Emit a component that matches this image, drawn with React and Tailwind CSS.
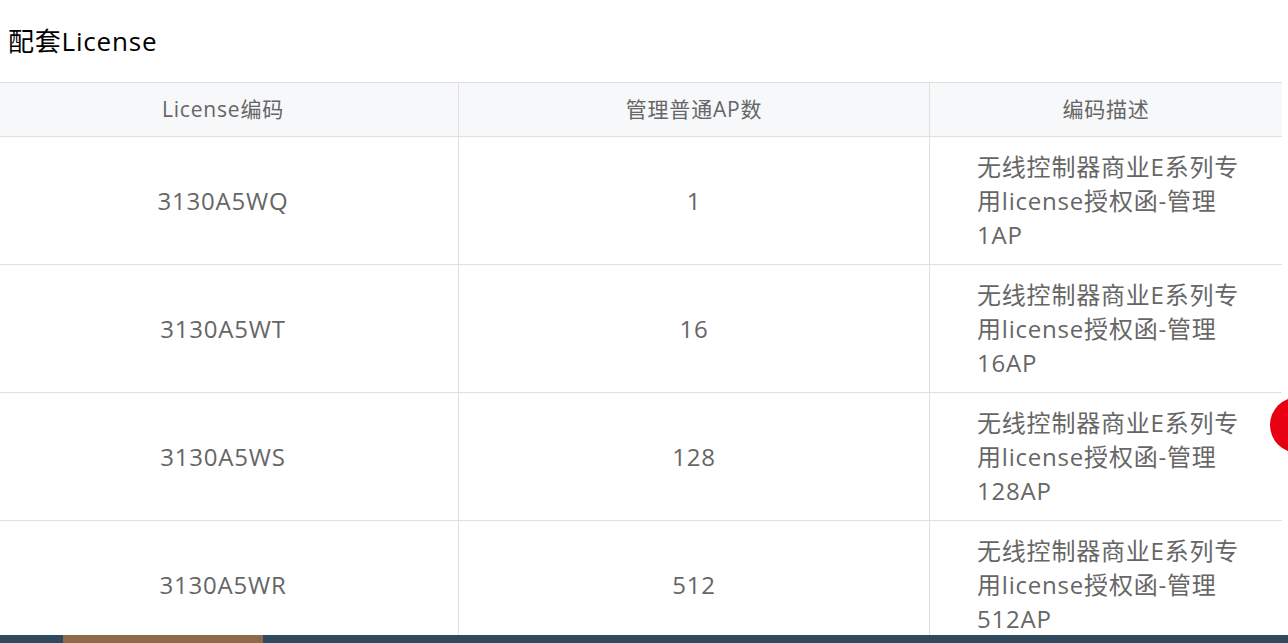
import React from "react";

const rows = [
  { code: "3130A5WQ", count: "1" },
  { code: "3130A5WT", count: "16" },
  { code: "3130A5WS", count: "128" },
  { code: "3130A5WR", count: "512" },
];

export default function App() {
  return (
    <div
      className="relative flex h-[643px] w-[1288px] flex-col overflow-hidden bg-white tracking-[0.8px]"
      style={{ fontFamily: '"Open Sans", "Noto Sans CJK SC", sans-serif' }}
    >
      {/* Title */}
      <div className="flex h-[82px] shrink-0 items-center pl-2 text-[26px] text-black">
        配套License
      </div>

      {/* Table (scrolled slightly to the left) */}
      <div className="flex-1 overflow-hidden">
        <div className="-ml-3 w-[1294px] border-t border-[#e0e0e0]">
          <div className="grid grid-cols-[471px_471px_352px] border-b border-[#e0e0e0] bg-[#f7f8fa] text-[21px] text-[#666]">
            <div className="flex h-[53px] items-center justify-center border-r border-[#e0e0e0]">License编码</div>
            <div className="flex h-[53px] items-center justify-center border-r border-[#e0e0e0]">管理普通AP数</div>
            <div className="flex h-[53px] items-center justify-center">编码描述</div>
          </div>
          {rows.map((r) => (
            <div
              key={r.code}
              className="grid grid-cols-[471px_471px_352px] border-b border-[#e0e0e0] text-[24px] text-[#666]"
            >
              <div className="flex h-[127px] items-center justify-center border-r border-[#e0e0e0]">{r.code}</div>
              <div className="flex h-[127px] items-center justify-center border-r border-[#e0e0e0]">{r.count}</div>
              <div className="flex h-[127px] items-center pl-[47px]">
                <div className="w-[274px] leading-[34px]">
                  无线控制器商业E系列专用license授权函-管理{r.count}AP
                </div>
              </div>
            </div>
          ))}
        </div>
      </div>

      {/* Bottom bar */}
      <div className="flex h-2 shrink-0 bg-[#2f4a5e]">
        <div className="ml-[63px] w-[200px] bg-[#8f6a48]" />
      </div>

      {/* Floating red button */}
      <div className="absolute left-[1270px] top-[397px] h-14 w-14 rounded-full bg-[#e60012]" />
    </div>
  );
}
